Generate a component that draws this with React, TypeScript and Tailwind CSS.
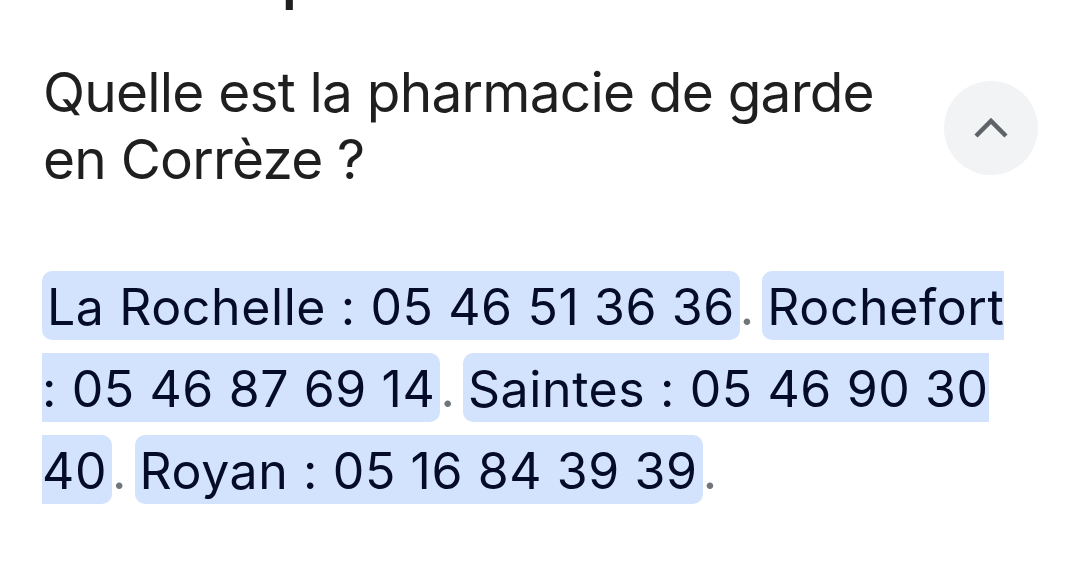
import React from "react";

function Hl({ children }: { children: React.ReactNode }) {
  return (
    <span className="bg-[#d3e3fd] rounded-[10px] px-[5px] pt-[6px] pb-[3px] text-[#040c28]">{children}</span>
  );
}

function Sep() {
  return <span className="text-[#70757a] tracking-[-3px]">. </span>;
}

export default function App() {
  return (
    <div className="w-[1080px] h-[571px] bg-white overflow-hidden font-['Inter',sans-serif] text-[#1f1f1f]">
      <div className="h-[12px] overflow-hidden pl-[282px]">
        <div className="-mt-[54px] text-[56px] leading-[67px] font-semibold">p</div>
      </div>
      <div className="flex items-start justify-between pl-[43px] pr-[42px] mt-[47px]">
        <div className="w-[860px] text-[55px] leading-[67px] tracking-[-0.8px]">
          Quelle est la pharmacie de garde
          <br />
          en Corrèze ?
        </div>
        <button className="mt-[22px] w-[94px] h-[94px] rounded-full bg-[#f1f3f4] flex items-center justify-center shrink-0">
          <svg width="36" height="22" viewBox="0 0 36 22" fill="none">
            <path d="M3 19 L18 4 L33 19" stroke="#5f6368" strokeWidth="4.5" />
          </svg>
        </button>
      </div>
      <div className="mt-[73px] pl-[42px] w-[1025px] text-[50px] leading-[82px] tracking-[0.6px]">
        <Hl>La Rochelle : 05 46 51 36 36</Hl>
        <Sep />
        <Hl>Rochefort : 05 46 87 69 14</Hl>
        <Sep />
        <Hl>Saintes : 05 46 90 30 40</Hl>
        <Sep />
        <Hl>Royan : 05 16 84 39 39</Hl>
        <span className="text-[#70757a]">.</span>
      </div>
    </div>
  );
}
